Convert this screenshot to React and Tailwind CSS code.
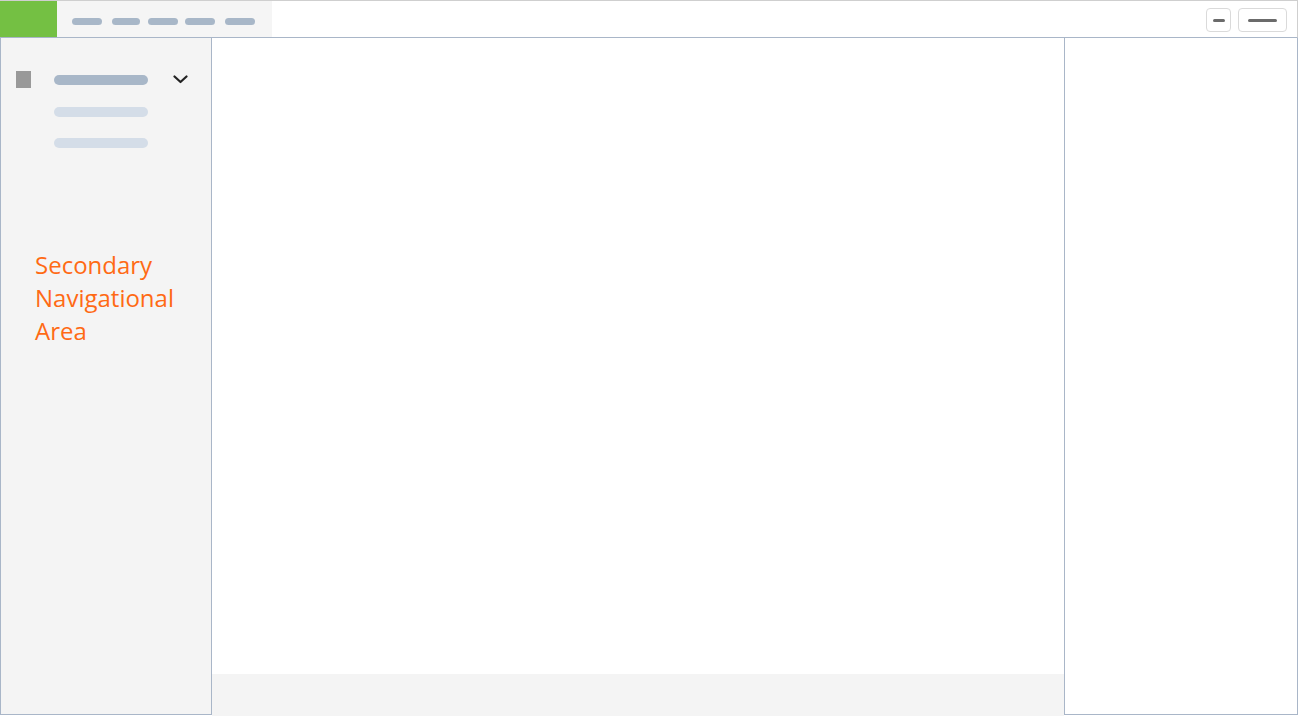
import React from 'react';

// Wireframe layout: app header, secondary nav, content area and right panel
const Pill = ({ className }) => <div className={`rounded-full ${className}`} />;

const Header = () => (
  <div className="flex h-[38px] border-t border-r border-b border-t-[#cfcfcf] border-r-[#cfcfcf] border-b-[#a9b6c8]">
    {/* Logo block */}
    <div className="w-[57px] h-full bg-[#74c043]" />

    {/* Primary nav */}
    <div className="flex w-[215px] h-full bg-[#f5f5f5] pt-[17px] pl-[15px]">
      <Pill className="w-[30px] h-[7px] bg-[#a8b7c8]" />
      <Pill className="ml-[10px] w-[28px] h-[7px] bg-[#a8b7c8]" />
      <Pill className="ml-[8px] w-[30px] h-[7px] bg-[#a8b7c8]" />
      <Pill className="ml-[7px] w-[30px] h-[7px] bg-[#a8b7c8]" />
      <Pill className="ml-[10px] w-[30px] h-[7px] bg-[#a8b7c8]" />
    </div>

    <div className="flex-1" />

    {/* Actions */}
    <div className="flex items-start gap-[7px] pt-[7px] pr-[10px]">
      <button className="flex items-center justify-center w-[25px] h-[24px] rounded-[4px] border border-[#dadada] bg-white">
        <span className="block w-[12px] h-[3px] rounded-full bg-[#6b6b6b]" />
      </button>
      <button className="flex items-center justify-center w-[49px] h-[24px] rounded-[4px] border border-[#dadada] bg-white">
        <span className="block w-[29px] h-[3px] rounded-full bg-[#6b6b6b]" />
      </button>
    </div>
  </div>
);

const Sidebar = () => (
  <div className="w-[212px] h-[677px] shrink-0 bg-[#f4f4f4] border-l border-r border-b border-[#a9b6c8] pt-[33px] pl-[15px]">
    <div className="flex items-center h-[17px]">
      <div className="w-[15px] h-[17px] bg-[#999999]" />
      <Pill className="ml-[23px] w-[94px] h-[10px] bg-[#a8b7c8]" />
      <svg className="ml-[25px]" width="15" height="9" viewBox="0 0 15 9" fill="none">
        <path d="M1.5 1.5 L7.5 7 L13.5 1.5" stroke="#222222" strokeWidth="2.2" strokeLinecap="round" strokeLinejoin="round" />
      </svg>
    </div>
    <Pill className="ml-[38px] mt-[19px] w-[94px] h-[10px] bg-[#d4dde8]" />
    <Pill className="ml-[38px] mt-[21px] w-[94px] h-[10px] bg-[#d4dde8]" />

    <p className="ml-[19px] mt-[100px] w-[160px] text-[24px] leading-[33px] text-[#ff6a14] font-['Open_Sans',sans-serif]">
      Secondary Navigational Area
    </p>
  </div>
);

export default function App() {
  return (
    <div className="w-[1298px] h-[716px] flex flex-col bg-white overflow-hidden font-['Open_Sans',sans-serif]">
      <Header />
      <div className="flex flex-1 items-start">
        <Sidebar />

        {/* Main content */}
        <div className="flex flex-col flex-1 h-[678px]">
          <div className="flex-1 bg-white" />
          <div className="h-[42px] bg-[#f4f4f4]" />
        </div>

        {/* Right panel */}
        <div className="w-[234px] h-[677px] shrink-0 bg-white border-l border-r border-b border-[#a9b6c8]" />
      </div>
    </div>
  );
}
